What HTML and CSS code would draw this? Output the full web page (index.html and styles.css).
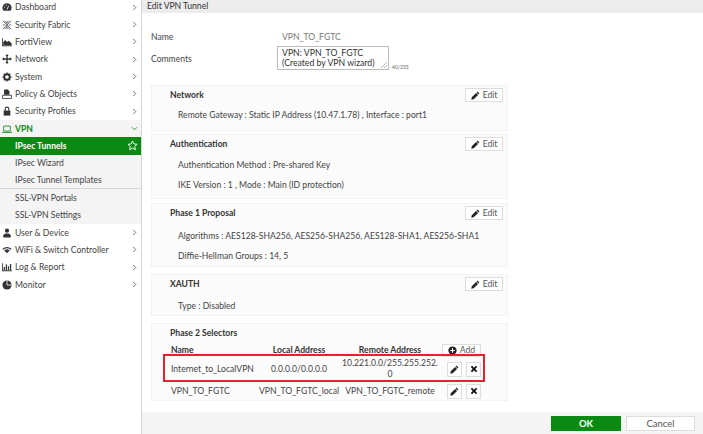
FILE: index.html
```html
<!DOCTYPE html>
<html lang="en">
<head>
<meta charset="utf-8">
<title>Edit VPN Tunnel</title>
<link rel="stylesheet" href="styles.css">
</head>
<body>
<svg class="defs" width="0" height="0" aria-hidden="true">
  <symbol id="pencil" viewBox="0 0 12 12"><path d="M8.6 0.8 11.2 3.4 10 4.6 7.4 2Z M6.8 2.6 9.4 5.2 3.6 11 0.4 11.6 1 8.4Z" fill="currentColor"/></symbol>
  <symbol id="cross" viewBox="0 0 10 10"><path d="M1 2.6 2.6 1 5 3.4 7.4 1 9 2.6 6.6 5 9 7.4 7.4 9 5 6.6 2.6 9 1 7.4 3.4 5Z" fill="currentColor"/></symbol>
  <symbol id="chev" viewBox="0 0 6 8"><path d="M1.5 1 4.5 4 1.5 7" fill="none" stroke="currentColor" stroke-width="1"/></symbol>
</svg>
<div class="app">
  <nav class="side">
    <div class="item"><svg class="ic" viewBox="0 0 12 12"><path d="M6 1.5A5.5 5.5 0 0 0 .5 7c0 1.4.5 2.6 1.3 3.5h8.4c.8-.9 1.3-2.100 1.300-3.500A5.500 5.500 0 0 0 6 1.500Z" fill="#333"/><path d="M6 9 8 4.500" stroke="#fff" stroke-width="1"/><circle cx="3" cy="6" r=".7" fill="#fff"/><circle cx="5" cy="3.600" r=".7" fill="#fff"/></svg><span class="lbl">Dashboard</span><svg class="chev"><use href="#chev"/></svg></div>
    <div class="item"><svg class="ic" viewBox="0 0 12 12"><path d="M1 1 11 11M11 1 1 11M6 1V4M6 8v3M1 6h3M8 6h3M3 1 6 4 9 1M3 11 6 8 9 11" stroke="#444" stroke-width=".9" fill="none"/></svg><span class="lbl">Security Fabric</span><svg class="chev"><use href="#chev"/></svg></div>
    <div class="item"><svg class="ic" viewBox="0 0 12 12"><path d="M0 1.500H1V10H12V11H0Z M1.500 9.500V6L4 3.500 6 6 8 4.500 11.500 7.500V9.500Z" fill="#333"/></svg><span class="lbl">FortiView</span><svg class="chev"><use href="#chev"/></svg></div>
    <div class="item"><svg class="ic" viewBox="0 0 12 12"><path d="M6 0 8 2.500H6.800V5.200H9.500V4L12 6 9.500 8V6.800H6.800V9.500H8L6 12 4 9.500H5.200V6.800H2.500V8L0 6 2.500 4V5.200H5.200V2.500H4Z" fill="#333"/></svg><span class="lbl">Network</span><svg class="chev"><use href="#chev"/></svg></div>
    <div class="item"><svg class="ic" viewBox="0 0 12 12"><circle cx="6" cy="6" r="3.300" fill="none" stroke="#333" stroke-width="2.200"/><path d="M6 .5V11.500M.5 6H11.500M2.100 2.100 9.900 9.900M9.900 2.100 2.100 9.900" stroke="#333" stroke-width="1.500" stroke-dasharray="1.800 7.400 1.800"/></svg><span class="lbl">System</span><svg class="chev"><use href="#chev"/></svg></div>
    <div class="item"><svg class="ic" viewBox="0 0 12 12"><path d="M2.500 .5H7L9 3V7H2.500Z" fill="#333"/><path d="M.5 7.500H11.500V11.500H.5Z" fill="none" stroke="#333"/></svg><span class="lbl">Policy &amp; Objects</span><svg class="chev"><use href="#chev"/></svg></div>
    <div class="item"><svg class="ic" viewBox="0 0 12 12"><path d="M2 5.500H10V11.500H2Z" fill="#333"/><path d="M3.800 6V3.500A2.200 2.200 0 0 1 8.200 3.500V6" fill="none" stroke="#333" stroke-width="1.300"/></svg><span class="lbl">Security Profiles</span><svg class="chev"><use href="#chev"/></svg></div>
    <div class="item open"><svg class="ic" viewBox="0 0 12 12"><path d="M2 2.500H10V8.500H2Z" fill="none" stroke="#0a8a12"/><path d="M0 9.500H12V10.500H0Z" fill="#0a8a12"/></svg><span class="lbl">VPN</span><svg class="chev down"><use href="#chev"/></svg></div>
    <div class="sub active"><span class="lbl">IPsec Tunnels</span><svg class="star" viewBox="0 0 12 12"><path d="M6 1 7.500 4.300 11 4.700 8.400 7.100 9.100 10.600 6 8.800 2.900 10.600 3.600 7.100 1 4.700 4.500 4.300Z" fill="none" stroke="#fff"/></svg></div>
    <div class="sub"><span class="lbl">IPsec Wizard</span></div>
    <div class="sub sep"><span class="lbl">IPsec Tunnel Templates</span></div>
    <div class="sub"><span class="lbl">SSL-VPN Portals</span></div>
    <div class="sub"><span class="lbl">SSL-VPN Settings</span></div>
    <div class="item"><svg class="ic" viewBox="0 0 12 12"><circle cx="6" cy="3.200" r="2.500" fill="#333"/><path d="M1.500 11.500V8.500L4 6.500H8L10.500 8.500V11.500Z" fill="#333"/></svg><span class="lbl">User &amp; Device</span><svg class="chev"><use href="#chev"/></svg></div>
    <div class="item"><svg class="ic" viewBox="0 0 12 12"><path d="M.5 4.500Q6 0 11.500 4.500L10.300 5.700Q6 2.300 1.700 5.700Z M2.700 6.500Q6 3.800 9.300 6.500L6 10Z" fill="#333"/></svg><span class="lbl">WiFi &amp; Switch Controller</span><svg class="chev"><use href="#chev"/></svg></div>
    <div class="item"><svg class="ic" viewBox="0 0 12 12"><path d="M0 1.500H1V10H12V11H0Z M2 6H3.500V9.500H2Z M4.500 3H6V9.500H4.500Z M7 5H8.500V9.500H7Z M9.500 2.500H11V9.500H9.500Z" fill="#333"/></svg><span class="lbl">Log &amp; Report</span><svg class="chev"><use href="#chev"/></svg></div>
    <div class="item"><svg class="ic" viewBox="0 0 12 12"><circle cx="6" cy="6" r="5.500" fill="#333"/><path d="M6 .5V6H11.500" fill="none" stroke="#fff"/></svg><span class="lbl">Monitor</span><svg class="chev"><use href="#chev"/></svg></div>
  </nav>
  <main class="main">
    <header class="title">Edit VPN Tunnel</header>
    <div class="content">
      <div class="field name-field">
        <span class="flabel">Name</span>
        <span class="fvalue">VPN_TO_FGTC</span>
      </div>
      <div class="field comment-field">
        <span class="flabel">Comments</span>
        <div class="textarea">VPN: VPN_TO_FGTC<br>(Created by VPN wizard)<svg class="grip" viewBox="0 0 6 6"><path d="M0 6 6 0M3 6 6 3" stroke="#999" stroke-width=".7"/></svg></div>
        <span class="count">40/255</span>
      </div>
      <section class="panel p-net">
        <div class="phead"><h2>Network</h2><span class="btn"><svg class="bi"><use href="#pencil"/></svg>Edit</span></div>
        <p>Remote Gateway : Static IP Address (10.47.1.78) , Interface : port1</p>
      </section>
      <section class="panel p-auth">
        <div class="phead"><h2>Authentication</h2><span class="btn"><svg class="bi"><use href="#pencil"/></svg>Edit</span></div>
        <p>Authentication Method : Pre-shared Key</p>
        <p>IKE Version : 1 , Mode : Main (ID protection)</p>
      </section>
      <section class="panel p-ph1">
        <div class="phead"><h2>Phase 1 Proposal</h2><span class="btn"><svg class="bi"><use href="#pencil"/></svg>Edit</span></div>
        <p>Algorithms : AES128-SHA256, AES256-SHA256, AES128-SHA1, AES256-SHA1</p>
        <p>Diffie-Hellman Groups : 14, 5</p>
      </section>
      <section class="panel p-xauth">
        <div class="phead"><h2>XAUTH</h2><span class="btn"><svg class="bi"><use href="#pencil"/></svg>Edit</span></div>
        <p>Type : Disabled</p>
      </section>
      <section class="panel p-ph2">
        <h2 class="ph2-title">Phase 2 Selectors</h2>
        <div class="row head">
          <span class="c-name">Name</span><span class="c-local">Local Address</span><span class="c-remote">Remote Address</span>
          <span class="c-act"><span class="btn add"><svg class="bi" viewBox="0 0 12 12"><circle cx="6" cy="6" r="5.500" fill="#222"/><path d="M6 3V9M3 6H9" stroke="#fff" stroke-width="1.600"/></svg>Add</span></span>
        </div>
        <div class="row r1">
          <span class="c-name">Internet_to_LocalVPN</span><span class="c-local">0.0.0.0/0.0.0.0</span><span class="c-remote">10.221.0.0/255.255.252.<br>0</span>
          <span class="c-act"><span class="sq"><svg class="bi2"><use href="#pencil"/></svg></span><span class="sq"><svg class="bi3"><use href="#cross"/></svg></span></span>
        </div>
        <div class="row r2">
          <span class="c-name">VPN_TO_FGTC</span><span class="c-local">VPN_TO_FGTC_local</span><span class="c-remote">VPN_TO_FGTC_remote</span>
          <span class="c-act"><span class="sq"><svg class="bi2"><use href="#pencil"/></svg></span><span class="sq"><svg class="bi3"><use href="#cross"/></svg></span></span>
        </div>
      </section>
    </div>
    <footer class="foot"><span class="ok">OK</span><span class="cancel">Cancel</span></footer>
  </main>
</div>
<div class="redbox"></div>
</body>
</html>
```
FILE: styles.css
```css
* { box-sizing: border-box; }
html, body { margin: 0; height: 100%; overflow: hidden; }
body { font-family: Lato, "Open Sans", sans-serif; font-size: 8.6px; color: #444; background: #fff; position: relative; }
.defs { position: absolute; }
.app { display: flex; height: 434px; }

.side { width: 142px; flex: none; border-right: 1px solid #d6d6d6; overflow: hidden; color: #444; background: #fff; }
.item, .sub { height: 17.35px; display: flex; align-items: center; position: relative; top: -1.5px; }
.item { padding-left: 2px; padding-right: 4px; }
.ic { width: 10px; height: 10px; margin-right: 3px; flex: none; }
.lbl { flex: 1; white-space: nowrap; }
.chev { width: 5px; height: 7px; color: #555; flex: none; }
.chev.down { transform: rotate(90deg); color: #0a8a12; }
.item.open { background: #f4f4f4; color: #0a8a12; font-weight: 700; }
.sub { background: #f4f4f4; padding-left: 15px; padding-right: 3px; }
.sub.sep { border-bottom: 1px solid #d8d8d8; }
.sub.active { background: #0a8a12; color: #fff; font-weight: 700; }
.star { width: 11px; height: 11px; flex: none; }

.main { flex: 1; display: flex; flex-direction: column; min-width: 0; }
.title { height: 13px; flex: none; background: #ececec; padding-left: 5px; line-height: 13px; color: #333; }
.content { flex: 1; padding: 0 195px 0 9px; display: flex; flex-direction: column; min-height: 0; }
.field { display: flex; }
.flabel { flex: none; }
.name-field { margin-top: 18px; height: 12px; align-items: center; }
.name-field .flabel { width: 131px; }
.fvalue { color: #777; }
.comment-field { margin-top: 3px; height: 24px; align-items: center; margin-bottom: 15px; }
.comment-field .flabel { width: 126px; position: relative; top: 1px; }
.textarea { width: 112px; height: 24px; border: 1px solid #bbb; padding: 1px 4px; line-height: 10px; color: #333; position: relative; flex: none; font-size: 8.7px; white-space: nowrap; }
.grip { position: absolute; right: 1px; bottom: 1px; width: 6px; height: 6px; }
.count { font-size: 5px; color: #666; margin-left: 3px; align-self: flex-end; }

.panel { width: 357px; background: #fbfbfb; border: 1px solid #f3f3f3; flex: none; padding: 0 4px 0 18px; }
.panel h2 { margin: 0; font-size: 8.6px; font-weight: 700; color: #333; }
.phead { display: flex; justify-content: space-between; align-items: center; height: 14px; margin-top: 2px; }
.panel p { margin: 0; padding-left: 8px; line-height: 12px; white-space: nowrap; }
.btn { display: inline-flex; align-items: center; justify-content: center; width: 38px; height: 14px; background: #fff; border: 1px solid #ddd; color: #555; }
.bi { width: 9px; height: 9px; margin-right: 3px; color: #222; flex: none; }
.bi2 { width: 9px; height: 9px; color: #222; }
.bi3 { width: 8px; height: 8px; color: #111; }

.p-net { height: 46px; margin-bottom: 3px; }
.p-net p { margin-top: 7px; }
.p-auth { height: 65px; margin-bottom: 4px; }
.p-auth p { margin-top: 8px; }
.p-ph1 { height: 64px; margin-bottom: 7px; }
.p-ph1 p { margin-top: 10px; }
.p-ph1 p + p { margin-top: 8px; }
.p-xauth { height: 42px; margin-bottom: 7px; }
.p-xauth p { margin-top: 9px; }

.p-ph2 { height: 78px; padding: 0 0 0 18px; }
.panel .ph2-title { margin: 3px 0 0 0; line-height: 12px; height: 12px; }
.row { display: grid; grid-template-columns: 88px 80px 102px 41px; align-items: center; text-align: center; margin-left: 1px; }
.row .c-name { text-align: left; white-space: nowrap; }
.row .c-local, .row .c-remote { white-space: nowrap; justify-self: center; }
.head { height: 14px; margin-top: 4px; font-weight: 700; color: #333; }
.r1 { height: 24px; line-height: 11px; }
.r2 { height: 16px; margin-top: 2px; }
.c-act { display: flex; justify-content: flex-end; gap: 4px; padding-right: 1px; font-weight: 400; }
.btn.add { width: 39px; height: 13px; flex: none; }
.sq { width: 15px; height: 15px; background: #fff; border: 1px solid #ddd; display: inline-flex; align-items: center; justify-content: center; }

.foot { height: 22px; flex: none; background: #f4f4f4; display: flex; align-items: center; justify-content: flex-end; gap: 5px; padding-right: 8px; }
.ok, .cancel { height: 15px; display: flex; align-items: center; justify-content: center; font-size: 9.5px; }
.ok { width: 70px; background: #0a8a12; color: #fff; font-weight: 700; }
.cancel { width: 69px; background: #fff; border: 1px solid #ddd; color: #555; }

.redbox { position: absolute; left: 163px; top: 354px; width: 322px; height: 28px; border: 2px solid #e8222c; }
```
